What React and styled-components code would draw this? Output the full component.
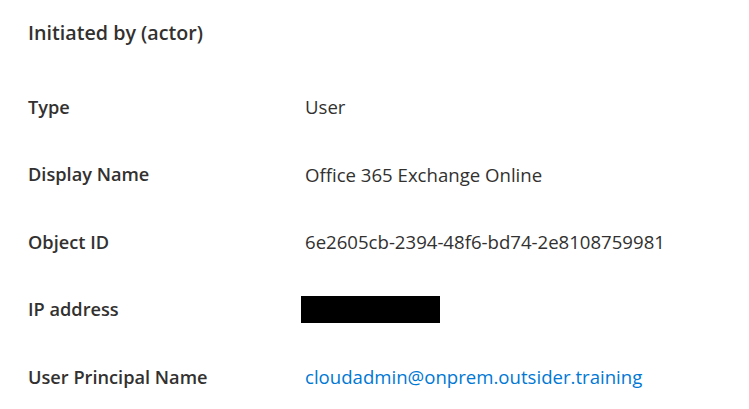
import React from 'react';
import styled, {createGlobalStyle} from 'styled-components';

const Global = createGlobalStyle`
    html, body {
        margin: 0;
        background: #fff;
    }
    body {
        font-family: "Open Sans", "Noto Sans", sans-serif;
        color: #323130;
    }
`

const Panel = styled.section`
    width: 749px;
    height: 409px;
    padding-left: 28px;
    box-sizing: border-box;
    overflow: hidden;
`

const Title = styled.h2`
    margin: 0;
    height: 73px;
    padding-top: 19px;
    box-sizing: border-box;
    font-size: 19.7px;
    font-weight: 600;
    line-height: 28px;
`

const List = styled.dl`
    margin: 0;
`

const Row = styled.div`
    display: grid;
    grid-template-columns: 277px 1fr;
    align-items: center;
    height: 67.5px;
`

const Term = styled.dt`
    font-size: 18.2px;
    font-weight: 600;
`

const Value = styled.dd`
    margin: 0;
    font-size: 18.6px;
    a {
        color: #0078d4;
        text-decoration: none;
    }
`

const Redacted = styled.span`
    display: block;
    width: 139px;
    height: 27px;
    margin-left: -4px;
    background: #000;
`

const rows = [
    {label: 'Type', value: 'User'},
    {label: 'Display Name', value: 'Office 365 Exchange Online'},
    {label: 'Object ID', value: '6e2605cb-2394-48f6-bd74-2e8108759981'},
    {label: 'IP address', redacted: true},
    {label: 'User Principal Name', link: 'cloudadmin@onprem.outsider.training'},
]

export default function App() {
    return (
        <Panel>
            <Global />
            <Title>Initiated by (actor)</Title>
            <List>
                {rows.map(row => (
                    <Row key={row.label}>
                        <Term>{row.label}</Term>
                        <Value>
                            {row.redacted && <Redacted />}
                            {row.link && <a href="#">{row.link}</a>}
                            {row.value}
                        </Value>
                    </Row>
                ))}
            </List>
        </Panel>
    );
}
